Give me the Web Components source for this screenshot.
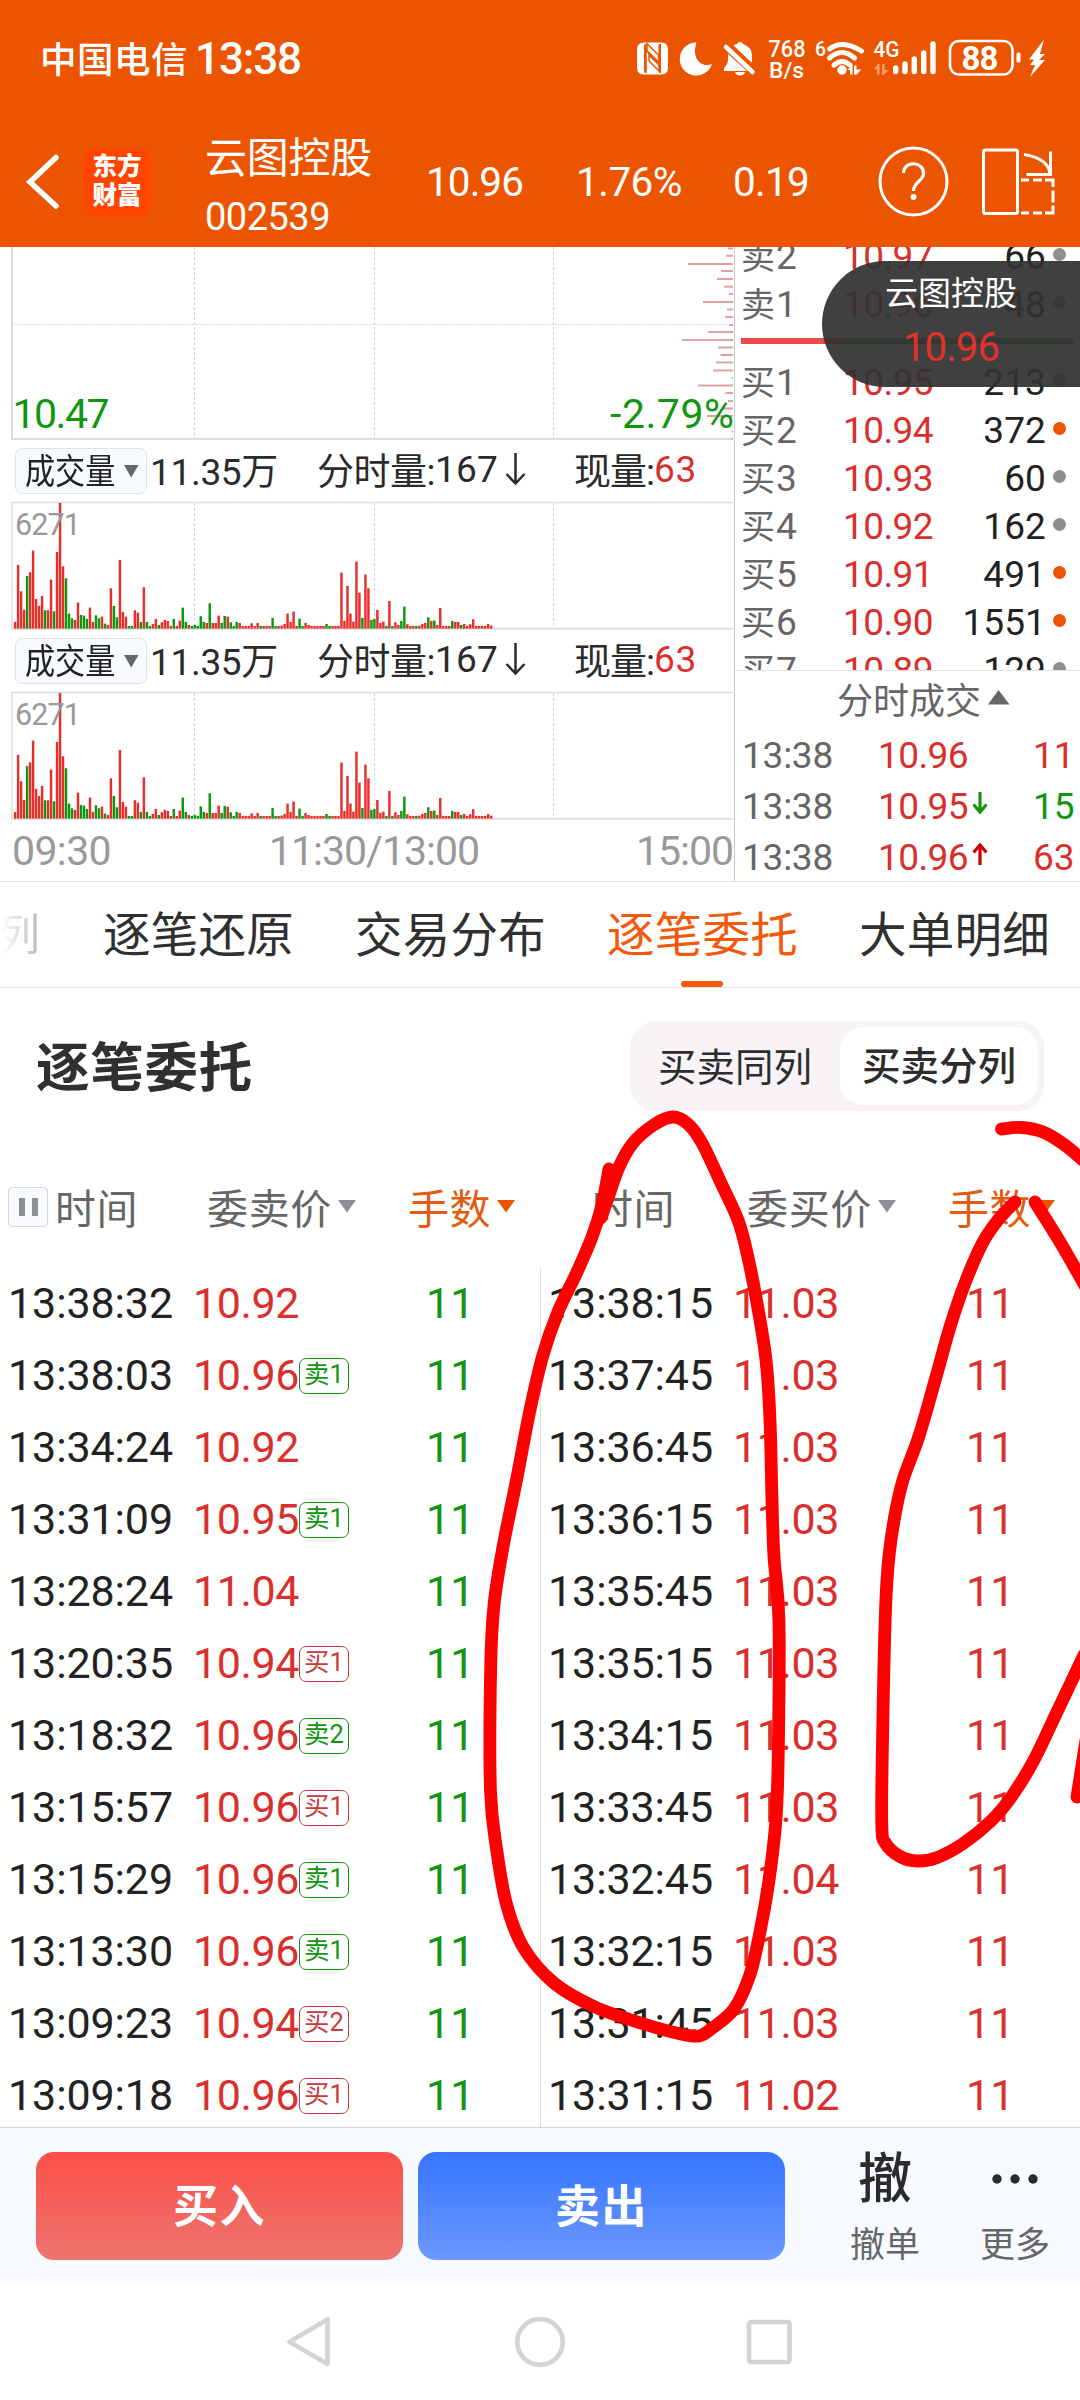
<!DOCTYPE html>
<html lang="zh-CN">
<head>
<meta charset="utf-8">
<title>云图控股 002539</title>
<style>
html,body{margin:0;padding:0;background:#fff}
body{width:1080px;height:2400px;overflow:hidden;font-family:Roboto,"Noto Sans CJK SC",sans-serif;color:#222}
</style>
</head>
<body>
<trade-app></trade-app>
<script>
const define = (name, html, after) => {
  customElements.define(name, class extends HTMLElement {
    constructor() { super(); this.attachShadow({ mode: 'open' }); }
    connectedCallback() {
      this.shadowRoot.innerHTML = typeof html === 'function' ? html(this) : html;
      if (after) after(this);
    }
  });
};
const RED = '#d9302e', GREEN = '#12960f';

/* Text run whose letter spacing is adjusted to the advance width in "w". */
define('fit-text', '<style>:host{display:inline-block;white-space:nowrap}</style><span><slot></slot></span>', el => {
  const w = +el.getAttribute('w');
  if (!w) return;
  const n = [...el.textContent].length;
  const natural = el.shadowRoot.querySelector('span').getBoundingClientRect().width;
  el.style.letterSpacing = ((w - natural) / n).toFixed(3) + 'px';
});

define('status-bar', `<style>
:host{display:flex;align-items:center;height:117px;color:#fff;font-weight:500}
.op{font-size:36.5px;margin-left:40px;width:155px;margin-top:-2px}
.tm{font-size:44px;width:435px}
</style>
<span class="op"><fit-text w="148">中国电信</fit-text></span><span class="tm"><fit-text w="106">13:38</fit-text></span>
<svg width="430" height="57" viewBox="630 30 430 57" fill="#fff">
 <path fill-rule="evenodd" d="M644 42.5h17q7 0 7 7v18q0 7-7 7h-17q-7 0-7-7v-18q0-7 7-7zM644 45v26.5h2.6v-20L661 70v-25h-2.600v18z"/>
 <path d="M645.500 44v29M660 44v29" stroke="#ec5500" stroke-width="2" fill="none"/><path d="M647 50.500l11.500 11.500v-7L647 43.500zM649 61l10 10v-6l-10-10z" stroke="#ec5500" stroke-width="1.500"/>
 <path d="M696.500 42.500A16.500 16.500 0 1 0 712 64C701 68.500 691 58 696.500 42.500z"/>
 <path d="M732 46q3-2 5-2q1-2 3-2t3 2q9 3 9 12v7zM728 54l19 17h-23v-3q4-4 4-8zM735 72h10q-1 3.500-5 3.500t-5-3.500z"/><path d="M730.500 44.500l25 24" stroke="#ec5500" stroke-width="3"/><path d="M726 47l26.500 25" stroke="#fff" stroke-width="4.500" stroke-linecap="round"/>
 <text x="768.500" y="56.500" font-size="24" textLength="37" lengthAdjust="spacingAndGlyphs">768</text><text x="769" y="78" font-size="22.500" textLength="35" lengthAdjust="spacingAndGlyphs">B/s</text>
 <text x="815" y="55.500" font-size="20" textLength="11" lengthAdjust="spacingAndGlyphs">6</text>
 <g fill="none" stroke="#fff" stroke-width="5" stroke-linecap="round"><path d="M829.500 49q13-10 32 2"/><path d="M829.500 58q12.500-11 25 0"/><path d="M834 65q8-7 16 0"/></g>
 <circle cx="842" cy="70" r="4.700"/><path d="M847.500 70l5-5v9.500h-2.500v-4.500zM854 65.500h2.500v4h5l-5 5h-2.500z"/>
 <text x="873.500" y="57" font-size="21.500" textLength="26" lengthAdjust="spacingAndGlyphs">4G</text>
 <path fill="#ff9d66" d="M874 69l4-5h1.500v10.500h-2.500v-5zM882 64h2.500v6h4l-5 5h-1.500z"/>
 <g stroke="#fff" stroke-width="5.400" stroke-linecap="round"><path d="M895.700 68v3.500M905 64v7.500M914.300 59v12.500M923.700 53v18.500M933 44v27.500"/></g>
 <rect x="950" y="41" width="62.500" height="33.500" rx="9" fill="none" stroke="#fff" stroke-width="2.600"/>
 <rect x="1016.500" y="52.500" width="4" height="10" rx="1.500"/>
 <text x="961.500" y="69.500" font-size="33" font-weight="700" textLength="37">88</text>
 <path d="M1044 39.500l-15 20h5l-4 5.500h5l-5 12 15-17h-6l6-6h-5z"/>
</svg>`);

define('stock-header', `<style>
:host{display:grid;grid-template-columns:83px 68px 54px 221px 150px 157px 145px 102px 100px;height:127px;padding-bottom:3px;align-items:center;color:#fff;font-size:40.500px}
.logo{grid-column:2;height:68px;border-radius:12px;background:#ff4500;font-weight:900;font-size:24.500px;line-height:29px;text-align:center;box-sizing:border-box;padding-top:4px}
.name{grid-column:4;display:flex;flex-direction:column;margin-top:12px}
.name fit-text{height:59px;line-height:59px}
.n1{font-size:42px}.n2{font-size:38px}
svg{display:block}
</style>
<svg width="83" height="70" viewBox="0 145 83 70"><path d="M56 155.500L30 180l26 24" fill="none" stroke="#fff" stroke-width="5.500" stroke-linecap="round"/></svg>
<div class="logo">东方<br>财富</div>
<div class="name"><fit-text class="n1" w="167">云图控股</fit-text><fit-text class="n2" w="125">002539</fit-text></div>
<fit-text w="97">10.96</fit-text><fit-text w="106">1.76%</fit-text><fit-text w="76">0.19</fit-text>
<svg width="72" height="72" viewBox="-36 -36 72 72" fill="none" stroke="#fff" stroke-width="3"><circle r="33.500" cy="-.5" cx="-.5"/><path d="M-10.500-9C-10-22 10.500-21 9.500-8C9-1-.5 0-.5 9" stroke-width="3.200"/><circle cx="-.5" cy="15" r="3" fill="#fff" stroke="none"/></svg>
<svg width="76" height="72" viewBox="980 143.500 76 72" fill="none" stroke="#fff" stroke-width="3"><rect x="983.500" y="147.500" width="34" height="63.500" rx="2"/><path d="M1024 152q25 4 26 20M1050.500 149v23h-24"/><path d="M1021 177.500h8M1033 177.500h9M1045 177.500h8v7M1053 188v12M1053 203v7.500h-8M1042 210.500h-9M1029 210.500h-8"/></svg>`);

/* Price chart: only the lower part scrolls into view. */
define('price-chart', () => {
  const ticks = [[248.5,728],[255.7,726],[264,688],[271,721],[279,717],[286.7,724],[294,729],[302,703],[309.500,727],[317,725],[325,729],[332,708],[340,682],[347.500,718],[355,720.500],[362.500,716],[370.500,713],[378,731.500],[385.500,698],[393,725.500],[401,728],[408.500,722],[416,707],[431.500,731.500],[439,731.500]];
  return `<style>:host{display:block;height:194px}svg{display:block}</style>
<svg width="733" height="194" viewBox="0 247 733 194" font-size="41">
<g stroke="#d4d4d4" stroke-dasharray="3 2"><path d="M194.500 247v192M374.500 247v192M553.500 247v192"/><path d="M12 324.500h721" stroke-dasharray="1.500 1.500"/></g>
<path d="M12 247v192M11 439h722" stroke="#dcdcdc" stroke-width="2" fill="none"/>
<g stroke="#dfa0a0" stroke-width="2">${ticks.map(t => `<path d="M${t[1]} ${t[0]}H733"/>`).join('')}</g>
<g fill="${GREEN}"><text x="12.500" y="428" textLength="97">10.47</text><text x="610" y="428" textLength="124">-2.79%</text></g></svg>`;
});

define('indicator-row', `<style>
:host{display:grid;grid-template-columns:132px 170px 257px 1fr;padding-left:15px;height:60px;align-items:center;font-size:37px;color:#2b2b2b}
.chip{box-sizing:border-box;height:46px;border:1.500px solid #e0e3ea;border-radius:7px;background:#f7faff;display:flex;align-items:center;padding-left:9px;color:#222}
.sq{width:99px;font-size:35px;white-space:nowrap;margin-top:-5px}
.sq span{display:inline-block;transform:scaleX(.86);transform-origin:0 50%}
.cell{display:flex;align-items:center;margin-top:-4px}
.v{padding-left:3px}
.red{color:${RED}}
</style>
<div class="chip"><div class="sq"><span>成交量</span></div><svg width="15" height="13"><path d="M0 0h14.500L7.200 12.500z" fill="#666"/></svg></div>
<div class="cell v"><fit-text w="128">11.35万</fit-text></div>
<div class="cell"><fit-text w="118">分时量:</fit-text><fit-text w="63">167</fit-text><svg width="36" height="34" viewBox="0 0 36 34"><path d="M17.500 1v30M8.500 22l9 9.500 9-9.500" fill="none" stroke="#2b2b2b" stroke-width="2.500"/></svg></div>
<div class="cell"><fit-text w="80">现量:</fit-text><fit-text w="43" class="red">63</fit-text></div>`);

const VOL = `1146r 975r 1054r 1110r 1008g 997r 932r 1077r 1098r 1068r 1111g 1111r 1019r 1114g 936r 789r 979r 1015g 1121g 1135g 1140r 1088r 1125g 1127g 1137g 1103r 1146r 1126g 1135g 1130r 1151g 1155r 1045r 1098g 1132g 960r 1116r 1130r 1158g 1158g 1111r 1118r 1146g 1042r 1146g 1158g 1152r 1137r 1155g 1147r 1140r 1143r 1158r 1137g 1158r 1142r 1103g 1146g 1155r 1158g 1155g 1158g 1129g 1146g 1149r 1090g 1149r 1149r 1127r 1149g 1128g 1130r 1147g 1158g 1146g 1149r 1158r 1158r 1158r 1150r 1158r 1149r 1158g 1158r 1158r 1158r 1134g 1158g 1158r 1157r 1152r 1121r 1146r 1115r 1158r 1136g 1158g 1149r 1155r 1158r 1158r 1158r 1158r 1158r 1152g 1158g 1158r 1158r 1158r 998r 1143r 1038r 1121r 1145r 965r 1058r 1134g 1004r 1045r 1140g 1137g 1110r 1149r 1145r 1158g 1083r 1158g 1147r 1155r 1143g 1100g 1153r 1158r 1158r 1158g 1157r 1152r 1149r 1132g 1143r 1142g 1155r 1104r 1158r 1158r 1158r 1143g 1146r 1146r 1155g 1152r 1158r 1153r 1138r 1158r 1158r 1158r 1158r 1152r 1157r`.split(' ');
define('volume-chart', () => {
  const bars = VOL.map((s, i) => {
    const h = (1166 - parseInt(s)) / 3, g = s.endsWith('g');
    return `<rect x="${(13.900 + i * 2.994).toFixed(2)}" y="${(127.600 - h).toFixed(2)}" width="2.450" height="${h.toFixed(2)}" fill="${g ? '#0f960f' : '#e62e2b'}"/>`;
  }).join('');
  return `<style>:host{display:block;height:130px}svg{display:block}</style>
<svg width="733" height="130"><g stroke="#d4d4d4" stroke-dasharray="3 2"><path d="M194.500 2v125M374.500 2v125M553.500 2v125"/></g>
<path d="M12 1v127M11 1.500h722" stroke="#dedede" stroke-width="1.500" fill="none"/><path d="M11 127.800h722" stroke="#dedede" stroke-width="2"/>
${bars}<text x="15" y="34" font-size="30.500" fill="#999" textLength="66">6271</text></svg>`;
});

define('time-axis', `<style>:host{display:grid;grid-template-columns:257px 367px 1fr;padding-left:12px;height:60px;align-items:center;font-size:41px;color:#999}</style>
<fit-text w="99">09:30</fit-text><fit-text w="210">11:30/13:00</fit-text><fit-text w="97">15:00</fit-text>`);

define('book-row', el => { const [a, b, c, d] = el.getAttribute('v').split(' '); return `<style>
:host{display:grid;grid-template-columns:102px 103px 100px 1fr;padding-left:6px;height:48px;align-items:center;font-size:37px;color:#222}
.l{color:#666;margin-top:-3px}.l fit-text:first-child{font-size:34px}.p{color:${RED}}.q{text-align:right}
i{display:block;width:13px;height:13px;border-radius:50%;margin:-4px 0 0 7px;background:${d === 'o' ? '#ec5500' : '#8e8e93'}}
</style><span class="l"><fit-text w="35">${a[0]}</fit-text><fit-text>${a[1]}</fit-text></span><fit-text class="p" w="90">${b}</fit-text><span class="q"><fit-text w="${c.length * 20.900}">${c}</fit-text></span><i></i>`; });

define('deal-row', el => { const [b, c, k] = el.getAttribute('v').split(' '); const g = k === 'd'; return `<style>
:host{display:grid;grid-template-columns:136px 94px 61px 42px;padding-left:7px;height:51px;align-items:center;font-size:37px;color:#666}
fit-text{margin-top:2px}
.p{color:${RED}}.q{color:${g ? GREEN : RED}}svg{margin:-5px 0 0 -2px}
</style><fit-text w="91">13:38</fit-text><fit-text class="p" w="90">${b}</fit-text><svg width="20" height="26">${k ? `<path transform="${g ? '' : 'rotate(180 10 13)'}" d="M10 2v20M3.500 14.500L10 22l6.500-7.500" fill="none" stroke="${g ? GREEN : '#d00000'}" stroke-width="3.200"/>` : ''}</svg><fit-text class="q" w="41.500">${c}</fit-text>`; });

define('order-book', `<style>
:host{display:block;border-left:1px solid #c8c8c8;box-sizing:border-box;height:634px}
.rows{height:424px;overflow:hidden;display:flex;flex-direction:column;border-bottom:1px solid #e2e2e2;box-sizing:border-box}
.rows>*{flex:none}.rows>:first-child{margin-top:-15px}
.bar{display:flex;margin:10px 6px 14px;height:6px}
.bar b{background:#ea4a4a;width:100px}.bar b+b{background:#3f9b3f;flex:1}
.head{height:58px;display:flex;align-items:center;font-size:36px;color:#666;padding-left:102px;gap:7px}
.head fit-text{margin-top:-4px}.head svg{margin-top:-5px}
</style>
<div class="rows">
<book-row v="卖2 10.97 66 g"></book-row><book-row v="卖1 10.96 48 g"></book-row>
<div class="bar"><b></b><b></b></div>
<book-row v="买1 10.95 213 g"></book-row><book-row v="买2 10.94 372 o"></book-row><book-row v="买3 10.93 60 g"></book-row><book-row v="买4 10.92 162 g"></book-row><book-row v="买5 10.91 491 o"></book-row><book-row v="买6 10.90 1551 o"></book-row><book-row v="买7 10.89 129 g"></book-row>
</div>
<div class="head"><fit-text w="144">分时成交</fit-text><svg width="22" height="16"><path d="M0 14.500L10.500 0 21.500 14.500z" fill="#666"/></svg></div>
<deal-row v="10.96 11"></deal-row><deal-row v="10.95 15 d"></deal-row><deal-row v="10.96 63 u"></deal-row>`);

define('quote-float', `<style>
:host{position:absolute;left:822px;top:261px;width:258px;height:126px;border-radius:63px 0 0 63px;background:rgba(50,50,50,.93);display:flex;flex-direction:column;box-sizing:border-box;padding:8px 0 0 63px}
.a{color:#fff;font-size:33px;height:50px;line-height:50px}.b{color:#e3302b;font-size:40px;height:56px;line-height:58px;padding-left:18px}
</style><fit-text class="a" w="132">云图控股</fit-text><div class="b"><fit-text w="96">10.96</fit-text></div>`);

define('tab-bar', `<style>
:host{display:grid;grid-template-columns:103px 252px 252px 252px 1fr;height:107px;border-top:1px solid #e2e2e2;border-bottom:1px solid #e4e4e4;box-sizing:border-box;font-size:47.500px;color:#303030;align-items:center}
span{position:relative;height:105px;line-height:108px}
.fade{font-size:44px;margin-left:-4px;background:linear-gradient(90deg,#fff 6px,#b5b0b5 46px);-webkit-background-clip:text;color:transparent;width:46px}
.on{color:#f2590b}.on:after{content:"";position:absolute;left:74px;bottom:0;width:42px;height:6.500px;border-radius:3px;background:#f2590b}
</style><span class="fade">列</span><span><fit-text w="191">逐笔还原</fit-text></span><span><fit-text w="191">交易分布</fit-text></span><span class="on"><fit-text w="191">逐笔委托</fit-text></span><span><fit-text w="191">大单明细</fit-text></span>`);

define('section-title', `<style>
:host{display:flex;justify-content:space-between;align-items:center;padding:33px 36px 0 36px}
h2{margin:0;font-size:53.500px;line-height:90px;height:90px;padding-top:3px;box-sizing:border-box;font-weight:700;color:#303030}
.seg{display:flex;align-items:center;width:414px;height:90px;border-radius:26px;background:#f7f3f7;font-size:38.500px;color:#2d2d2d;box-sizing:border-box;padding:0 6px 0 28px;justify-content:space-between}
.seg>fit-text{margin-top:-4px}
.on{width:198px;height:78px;line-height:79px;border-radius:23px;background:#fff;font-weight:500;text-align:center}
</style><h2><fit-text w="217">逐笔委托</fit-text></h2><div class="seg"><fit-text w="154">买卖同列</fit-text><div class="on"><fit-text w="154">买卖分列</fit-text></div></div>`);

define('table-head', el => { const side = el.getAttribute('side'); const sell = side === '卖'; const tri = c => `<svg width="18" height="14"><path d="M0 0h18L9 12.500z" fill="${c}"/></svg>`; return `<style>
:host{display:grid;grid-template-columns:199px 201px 1fr;padding-left:8px;width:532px;height:80px;align-items:center;font-size:41px;color:#666}
div{display:flex;align-items:center;gap:6px}
div>fit-text{margin-top:-2px}
.pause{box-sizing:border-box;width:40px;height:40px;border:1.500px solid #d5d8e0;border-radius:4px;background:#f7faff;justify-content:center;gap:7px}
.first{gap:${sell ? 7 : 4}px}
.pause i{width:6px;height:18px;background:#8e8e93}
.o{color:#e25c10}.blank{width:40px}
</style><div class="first">${sell ? '<div class="pause"><i></i><i></i></div>' : '<div class="blank"></div>'}<fit-text w="83">时间</fit-text></div>
<div><fit-text w="125">委${side}价</fit-text>${tri('#8e8e93')}</div><div class="o"><fit-text w="83" >手数</fit-text>${tri('#ec5500')}</div>`; });

define('order-row', el => { const [t, p, tag] = el.getAttribute('v').split(' '); const c = (tag || '')[0] === '卖' ? GREEN : '#c93a3a'; return `<style>
:host{display:grid;grid-template-columns:185px 233px 1fr;padding-left:8px;height:72px;flex:none;align-items:center;font-size:43px;color:#222}
.p{color:${RED};display:flex;align-items:center}.q{color:${el.hasAttribute('buy') ? RED : GREEN}}
fit-text{margin-top:-1px}
.tag{box-sizing:border-box;margin-top:2px;width:50px;height:36px;border:1.300px solid ${c};border-radius:7px;color:${c};font-size:25.500px;line-height:31px;text-align:center;white-space:nowrap}
</style><fit-text w="165">${t}</fit-text><span class="p"><fit-text w="106">${p}</fit-text>${tag ? `<span class="tag">${tag}</span>` : ''}</span><fit-text class="q" w="48.300">11</fit-text>`; });

const SELL = ['13:38:32 10.92','13:38:03 10.96 卖1','13:34:24 10.92','13:31:09 10.95 卖1','13:28:24 11.04','13:20:35 10.94 买1','13:18:32 10.96 卖2','13:15:57 10.96 买1','13:15:29 10.96 卖1','13:13:30 10.96 卖1','13:09:23 10.94 买2','13:09:18 10.96 买1'];
const BUY = ['13:38:15 11.03','13:37:45 11.03','13:36:45 11.03','13:36:15 11.03','13:35:45 11.03','13:35:15 11.03','13:34:15 11.03','13:33:45 11.03','13:32:45 11.04','13:32:15 11.03','13:31:45 11.03','13:31:15 11.02'];
define('order-table', `<style>
:host{display:grid;grid-template-columns:540px 540px;grid-template-rows:80px 880px;margin-top:56px}
.col{overflow:hidden;display:flex;flex-direction:column;padding-top:20px;height:880px;box-sizing:border-box}
.r{position:relative}
.r:before{content:"";position:absolute;left:0;top:21px;bottom:0;width:1px;background:#e0e0e0}
</style><table-head side="卖"></table-head><table-head side="买"></table-head>
<div class="col">${SELL.map(v => `<order-row v="${v}"></order-row>`).join('')}</div>
<div class="col r">${BUY.map(v => `<order-row buy v="${v}"></order-row>`).join('')}</div>`);

define('trade-bar', `<style>
:host{display:flex;height:157px;box-sizing:border-box;border-top:1px solid #ccd3da;background:#f7faff;padding:24px 0 0 36px}
.btn{width:367px;height:108px;border-radius:18px;color:#fff;font-size:45px;font-weight:700;line-height:111px;text-align:center;margin-right:15px}
.buy{background:linear-gradient(#fb5047,#ee746f)}.sell{background:linear-gradient(#3575ff,#6c98ff)}
.act{display:flex;flex-direction:column;align-items:center;font-size:35px;color:#666}
.c{width:70px;margin-left:50px}.m{width:70px;margin-left:60px}
.g{font-size:54px;font-weight:500;color:#2b2b2b;height:54px;line-height:56px}
.t{height:48px;line-height:50px;margin-top:15px}
</style><div class="btn buy"><fit-text w="93">买入</fit-text></div><div class="btn sell"><fit-text w="93">卖出</fit-text></div>
<div class="act c"><span class="g">撤</span><span class="t">撤单</span></div>
<div class="act m"><svg class="g" width="48" height="54" fill="#2b2b2b"><circle cx="6" cy="27" r="4.700"/><circle cx="24" cy="27" r="4.700"/><circle cx="42" cy="27" r="4.700"/></svg><span class="t">更多</span></div>`);

define('system-nav', `<style>:host{display:flex;height:114px;align-items:center;padding-left:286px}svg{display:block}</style>
<svg width="508" height="56" viewBox="286 2313 508 56" fill="none" stroke="#d5d3d6" stroke-width="4.700" stroke-linejoin="round"><path d="M327.500 2319.500v44.500L289.500 2341.700z"/><circle cx="540" cy="2342" r="22.800"/><rect x="749" y="2322" width="40.500" height="40" rx="2"/></svg>`);

/* Freehand marker strokes, smoothed through their sample points. */
define('marker-layer', () => {
  const strokes = [
    [[609,1169],[602,1205],[592,1237],[577,1272],[558,1312],[543,1355],[530,1410],[516.5,1480],[503,1547],[494,1605],[490.700,1667],[490.500,1791],[497,1852],[507,1906],[523.700,1948],[554,1983],[595,2007],[644,2024],[681,2034],[699,2036],[711,2029],[734,2009],[750,1974.500],[760,1932],[768.600,1883],[775.500,1825],[778,1768],[779,1622],[774,1557],[772,1500],[770,1420],[766,1360],[757,1303],[747,1253],[738,1220],[721,1183],[702,1143],[688,1124],[672.600,1117],[653.600,1125],[633,1143],[619,1167],[609,1195],[601,1218]],
    [[1001.500,1129],[1022,1127.500],[1043,1132],[1063.400,1144],[1084,1161]],
    [[1015,1202],[998,1220],[982.500,1243],[965,1283],[950,1327],[936,1377],[919,1436],[903,1480],[895,1515],[889,1556],[885.700,1605],[883,1714],[881.800,1823],[886,1844],[901,1857],[917.500,1861],[936,1858],[962.500,1844],[991,1821],[1011.500,1796.600],[1034,1760],[1056,1714],[1084,1655]],
    [[1035,1202],[1060,1242],[1088,1291]],
    [[1077,1797],[1086,1740]]];
  const d = p => { let s = `M${p[0]}`; for (let i = 0; i < p.length - 1; i++) { const a = p[i - 1] || p[i], b = p[i], c = p[i + 1], e = p[i + 2] || c; s += `C${b[0] + (c[0] - a[0]) / 6} ${b[1] + (c[1] - a[1]) / 6} ${c[0] - (e[0] - b[0]) / 6} ${c[1] - (e[1] - b[1]) / 6} ${c[0]} ${c[1]}`; } return s; };
  return `<style>:host{position:absolute;left:0;top:0;width:1080px;height:2400px;pointer-events:none}svg{display:block}</style>
<svg width="1080" height="2400" fill="none" stroke="#f00" stroke-width="12.800" stroke-linecap="round" stroke-linejoin="round">${strokes.map(p => `<path d="${d(p)}"/>`).join('')}</svg>`;
});

define('trade-app', `<style>
:host{display:block;position:relative;width:1080px;height:2400px;overflow:hidden;background:#fff}
.top{background:#ec5500;height:247px}
.quote{display:grid;grid-template-columns:734px 346px;height:634px;overflow:hidden}
</style>
<div class="top"><status-bar></status-bar><stock-header></stock-header></div>
<div class="quote"><div><price-chart></price-chart><indicator-row></indicator-row><volume-chart></volume-chart><indicator-row></indicator-row><volume-chart></volume-chart><time-axis></time-axis></div><order-book></order-book></div>
<tab-bar></tab-bar><section-title></section-title><order-table></order-table><trade-bar></trade-bar><system-nav></system-nav>
<quote-float></quote-float><marker-layer></marker-layer>`);
</script>
</body>
</html>
